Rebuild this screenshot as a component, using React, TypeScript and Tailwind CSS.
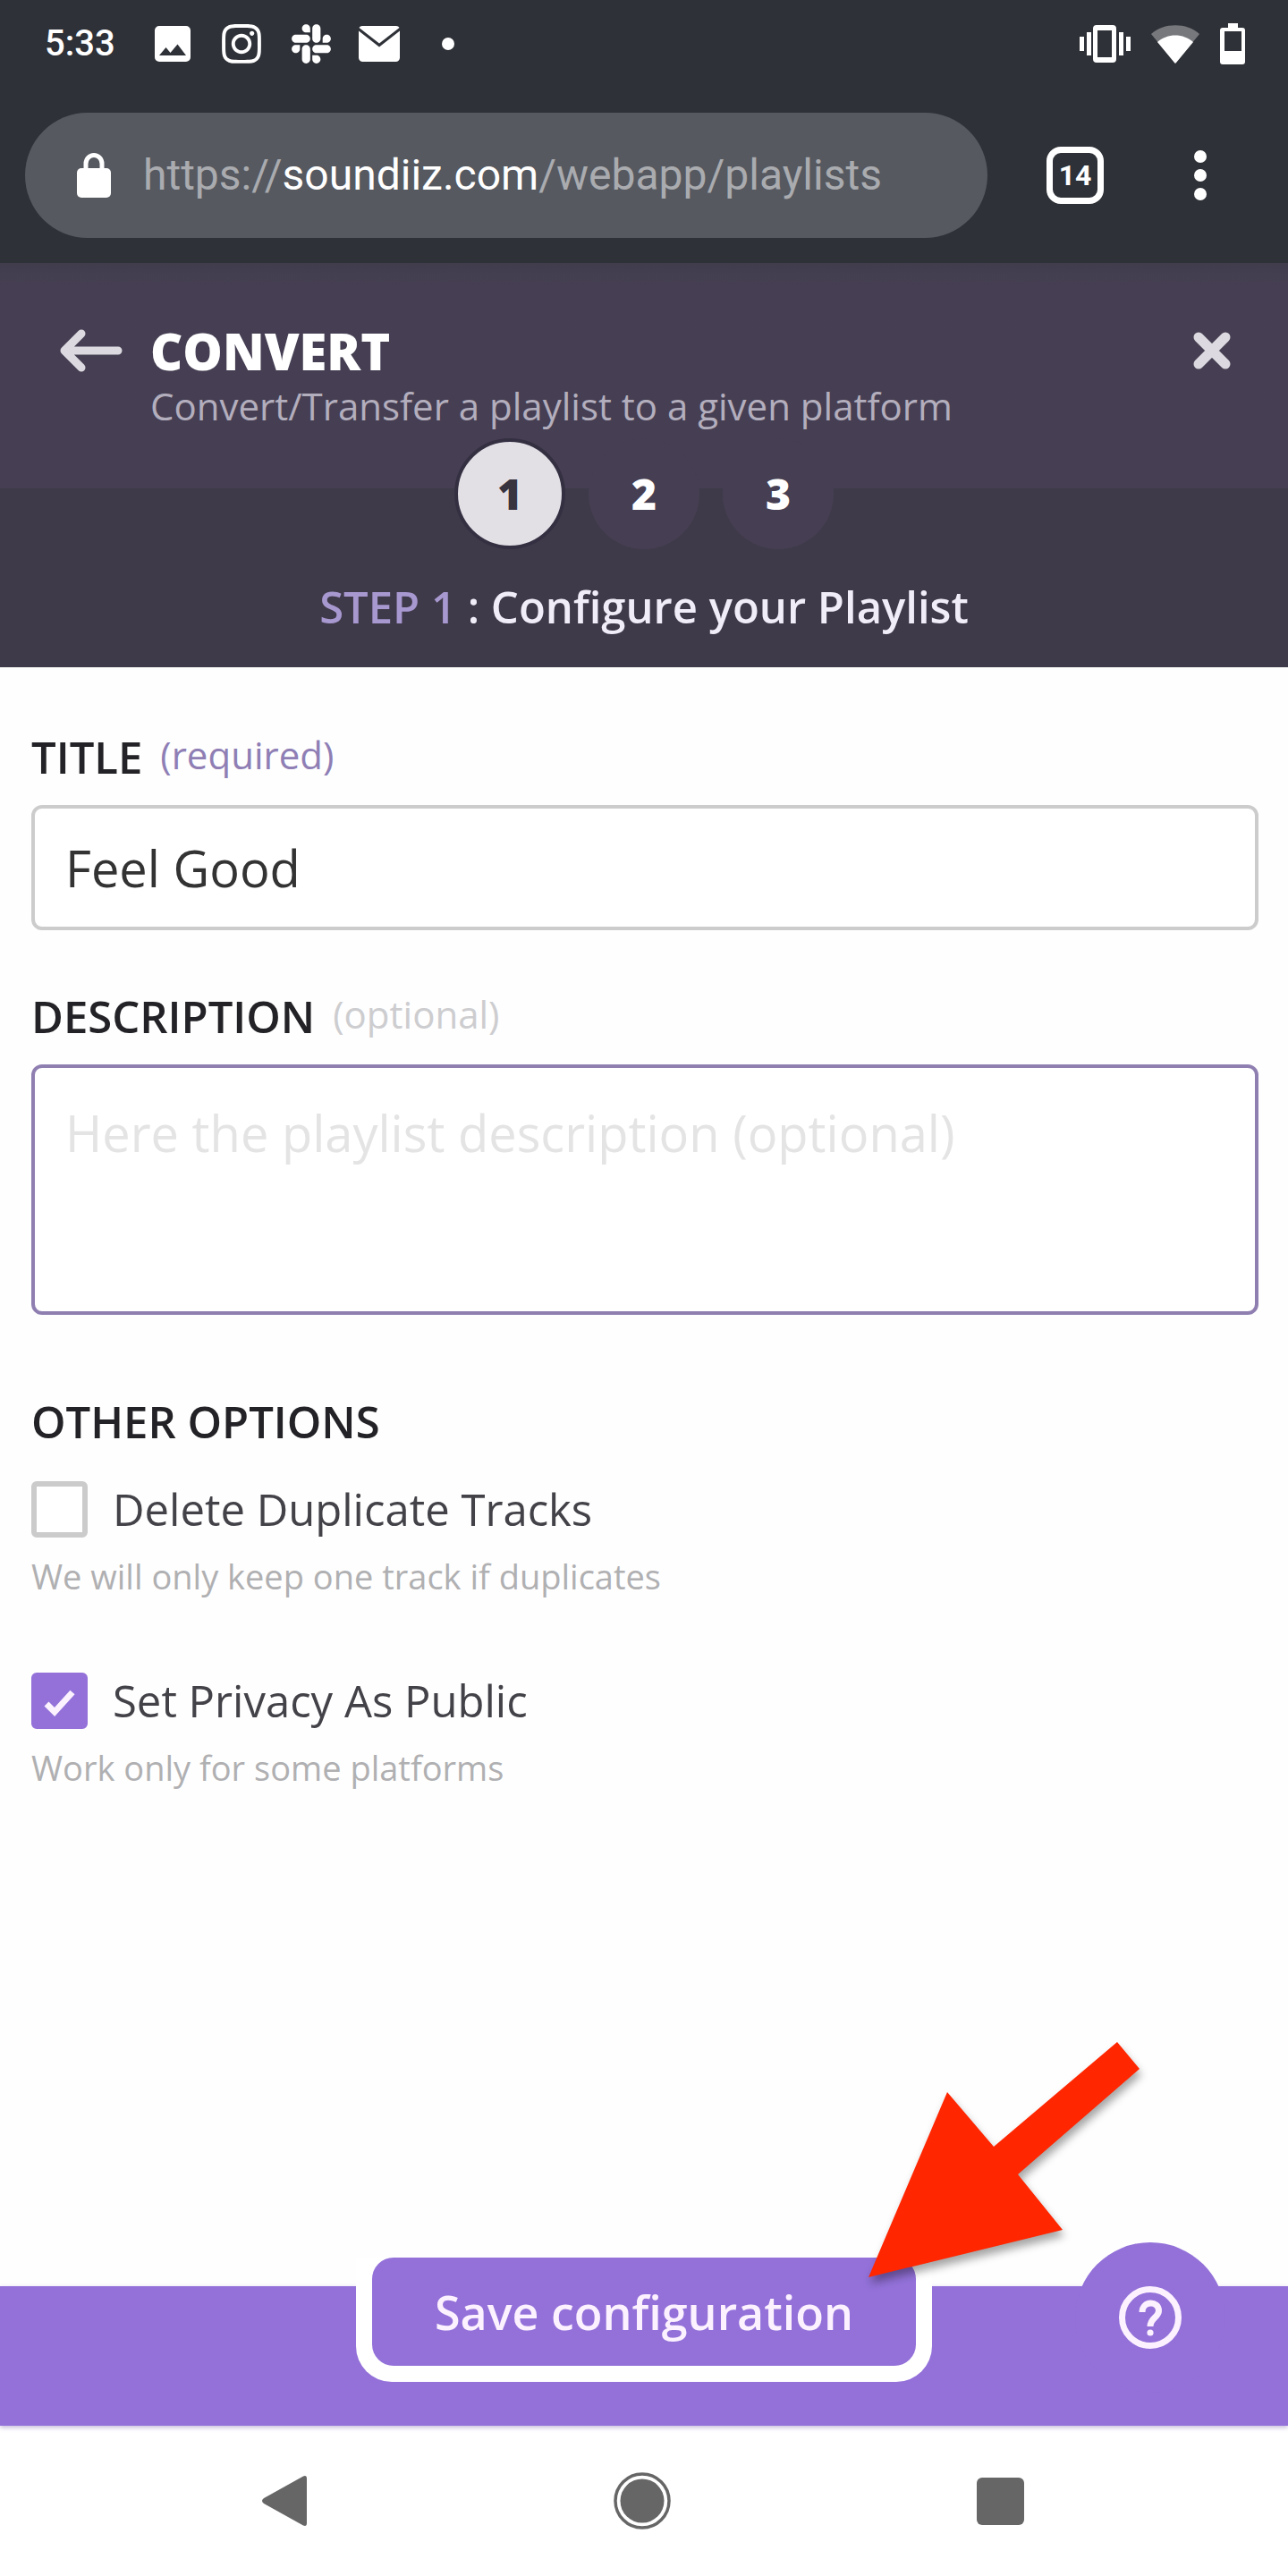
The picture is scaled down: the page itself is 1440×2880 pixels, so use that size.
import { useState } from 'react'
import { FaInstagram, FaSlack } from 'react-icons/fa'

const STEPS = [1, 2, 3]

function StatusBar() {
  return (
    <div className="flex h-[98px] items-center justify-between pl-[50px] pr-12 text-white">
      <div className="flex items-center">
        <span className="mr-11 font-[Roboto,sans-serif] text-[40px] font-medium leading-none">5:33</span>
        <svg className="mr-8 h-10 w-10" viewBox="0 0 40 40" fill="currentColor" aria-hidden="true">
          <path
            fillRule="evenodd"
            d="M5 0h30a5 5 0 0 1 5 5v30a5 5 0 0 1-5 5H5a5 5 0 0 1-5-5V5a5 5 0 0 1 5-5Zm0 33h30L25.500 20.500l-8 9.500-5-6Z"
          />
        </svg>
        <FaInstagram className="mr-7 size-[50px]" aria-hidden="true" />
        <FaSlack className="mr-7 size-[50px]" aria-hidden="true" />
        <svg className="mr-[47px] h-10 w-[46px]" viewBox="0 0 46 40" fill="currentColor" aria-hidden="true">
          <path d="M4 0h38c1.500 0 2.800.7 3.500 2L23 19.500.5 2C1.200.7 2.500 0 4 0Z" />
          <path d="M0 5.500 23 23.500 46 5.500V35.500a4.500 4.500 0 0 1-4.500 4.500h-37A4.500 4.500 0 0 1 0 35.500Z" />
        </svg>
        <span className="size-3.5 rounded-full bg-white" />
      </div>
      <div className="flex items-center gap-[23px]">
        <svg className="h-[42px] w-[57px]" viewBox="0 0 57 42" fill="currentColor" aria-hidden="true">
          <rect x="0" y="13" width="5" height="16" />
          <rect x="8" y="8" width="5" height="26" />
          <path
            fillRule="evenodd"
            d="M19 0h18a4 4 0 0 1 4 4v34a4 4 0 0 1-4 4H19a4 4 0 0 1-4-4V4a4 4 0 0 1 4-4Zm1 6v30h16V6Z"
          />
          <rect x="44" y="8" width="5" height="26" />
          <rect x="52" y="13" width="5" height="16" />
        </svg>
        <svg className="h-[43px] w-[54px]" viewBox="0 0 54 43" fill="currentColor" aria-hidden="true">
          <path opacity=".35" d="M0 10C14-3 40-3 54 10L27 43Z" />
          <path d="M7 19C18 9 36 9 47 19L28 42q-1 1.400-2 0Z" />
        </svg>
        <svg className="h-[46px] w-7" viewBox="0 0 28 46" fill="currentColor" aria-hidden="true">
          <path
            fillRule="evenodd"
            d="M9 0h11v5h5a3 3 0 0 1 3 3v35a3 3 0 0 1-3 3H3a3 3 0 0 1-3-3V8a3 3 0 0 1 3-3h6ZM5 9v22h19V9Z"
          />
        </svg>
      </div>
    </div>
  )
}

function AddressBar() {
  return (
    <div className="flex items-center py-7 pl-7 pr-[84px] font-[Roboto,sans-serif]">
      <button
        type="button"
        aria-label="Edit address"
        className="flex h-[140px] flex-1 items-center rounded-full bg-[#565960] pl-[58px] text-left"
      >
        <svg className="mr-9 h-[50px] w-[38px] shrink-0 text-white" viewBox="0 0 38 50" aria-hidden="true">
          <path d="M10 20V12a9 9.500 0 0 1 18 0v8" fill="none" stroke="currentColor" strokeWidth="5" />
          <rect y="17" width="38" height="33" rx="5" fill="currentColor" />
        </svg>
        <span className="whitespace-nowrap text-5xl leading-none text-[#a9abaf]">
          https://<span className="text-white">soundiiz.com</span>/webapp/playlists
        </span>
      </button>
      <button
        type="button"
        aria-label="Open tabs"
        className="ml-[66px] flex size-16 items-center justify-center rounded-2xl border-[7px] border-white text-[32px] font-bold leading-none text-white"
      >
        14
      </button>
      <button type="button" aria-label="Menu" className="ml-[94px] flex w-7 flex-col items-center gap-[7px] py-4">
        <span className="size-3.5 rounded-full bg-white" />
        <span className="size-3.5 rounded-full bg-white" />
        <span className="size-3.5 rounded-full bg-white" />
      </button>
    </div>
  )
}

function ConvertHeader() {
  return (
    <header>
      <div className="flex items-start bg-linear-to-b from-[#413d4d] to-[#463f53] to-10% px-16 pb-[62px] pt-[66px]">
        <button type="button" aria-label="Back" className="flex h-16 w-[104px] shrink-0 items-center">
          <svg className="h-12 w-[76px]" viewBox="0 0 76 48" fill="none" aria-hidden="true">
            <path
              d="M68 24H8M27 5 8 24 27 43"
              stroke="#dcdae0"
              strokeWidth="9"
              strokeLinecap="round"
              strokeLinejoin="round"
            />
          </svg>
        </button>
        <div className="flex-1">
          <h1 className="text-[56px] font-extrabold leading-[64px] text-white">CONVERT</h1>
          <p className="text-[42px] leading-[60px] text-[#b3aebd]">Convert/Transfer a playlist to a given platform</p>
        </div>
        <button type="button" aria-label="Close" className="flex h-16 shrink-0 items-center">
          <svg className="size-[42px]" viewBox="0 0 42 42" aria-hidden="true">
            <path d="M6 6 36 36M36 6 6 36" stroke="#dcdae0" strokeWidth="11" strokeLinecap="round" />
          </svg>
        </button>
      </div>
      <div className="flex flex-col bg-[#3f3a4a] pb-9 text-center">
        <ol className="relative -mt-14 flex justify-center gap-[26px] text-5xl font-extrabold">
          {STEPS.map((step) => (
            <li
              key={step}
              className={
                step === 1
                  ? 'flex size-[124px] items-center justify-center rounded-full border-4 border-[#352f42] bg-[#e2dfe5] text-[#37333f]'
                  : 'flex size-[124px] items-center justify-center rounded-full bg-[#463f53] text-white'
              }
            >
              {step}
            </li>
          ))}
        </ol>
        <h2 className="mt-8 text-[49px] font-semibold leading-[64px] text-[#f1edf8]">
          <span className="text-[#a898d0]">STEP 1</span> : Configure your Playlist
        </h2>
      </div>
    </header>
  )
}

type OptionProps = {
  id: string
  label: string
  hint: string
  checked: boolean
  onChange: (checked: boolean) => void
}

function Option({ id, label, hint, checked, onChange }: OptionProps) {
  return (
    <div>
      <div className="flex items-center">
        <span className="relative mr-7 size-[63px]">
          <input
            id={id}
            type="checkbox"
            checked={checked}
            onChange={(e) => onChange(e.target.checked)}
            className="block size-[63px] appearance-none rounded-md border-[6px] border-[#cbcbcb] bg-white checked:border-[#9371d9] checked:bg-[#9371d9]"
          />
          {checked && (
            <svg className="pointer-events-none absolute inset-0 size-[63px]" viewBox="0 0 63 63" aria-hidden="true">
              <path d="M17 35 26 44 46 22" fill="none" stroke="#fbf1ff" strokeWidth="7" />
            </svg>
          )}
        </span>
        <label htmlFor={id} className="text-[49px] leading-[64px] text-[#434248]">
          {label}
        </label>
      </div>
      <p className="mt-4 text-[38px] leading-[54px] text-[#b0b0b2]">{hint}</p>
    </div>
  )
}

function SaveBar() {
  return (
    <footer className="relative flex h-[156px] items-start justify-center bg-[#9371d9] shadow-[0_2px_5px_rgba(90,60,150,0.35)]">
      <div className="relative -mt-8 rounded-b-[40px] bg-white px-[18px] pb-[18px]">
        <button
          type="submit"
          form="playlist-config"
          className="h-[121px] rounded-3xl bg-[#9371d9] px-[70px] text-[52px] font-semibold leading-none text-[#fcf1ff]"
        >
          Save configuration
        </button>
        <svg
          className="pointer-events-none absolute -top-[248px] left-[567px] z-10 h-[290px] w-80 drop-shadow-[2px_7px_5px_rgba(0,0,0,0.35)]"
          viewBox="0 0 320 290"
          aria-hidden="true"
        >
          <path d="M6 270 94 63 146 124 284 7 309 37 173 155 223 217Z" fill="#ff2600" />
        </svg>
      </div>
      <button
        type="button"
        aria-label="Help"
        className="absolute -top-[49px] right-[70px] flex size-[168px] items-center justify-center rounded-full bg-[#9371d9]"
      >
        <svg className="size-[70px]" viewBox="0 0 70 70" fill="none" stroke="#fcf1ff" aria-hidden="true">
          <circle cx="35" cy="35" r="31.500" strokeWidth="7" />
          <path d="M26 29C26 16 44.500 16 44.500 27.500C44.500 35 35 35 35 45" strokeWidth="7" />
          <circle cx="35" cy="52" r="3.600" fill="#fcf1ff" stroke="none" />
        </svg>
      </button>
    </footer>
  )
}

function NavigationBar() {
  return (
    <nav className="flex h-[168px] items-center justify-between bg-white pl-[292px] pr-[295px] text-[#666]">
      <button type="button" aria-label="Back">
        <svg className="h-[58px] w-[52px]" viewBox="0 0 52 58" fill="currentColor" aria-hidden="true">
          <path d="M47 1.500Q51 0 51 4V54Q51 58 47 56.500L3 32Q-1 29 3 26Z" />
        </svg>
      </button>
      <button type="button" aria-label="Home">
        <svg className="size-16" viewBox="0 0 64 64" aria-hidden="true">
          <circle cx="32" cy="32" r="30" fill="none" stroke="currentColor" strokeWidth="3.500" />
          <circle cx="32" cy="32" r="24.500" fill="currentColor" />
        </svg>
      </button>
      <button type="button" aria-label="Recent apps">
        <span className="block size-[53px] rounded-md bg-[#666]" />
      </button>
    </nav>
  )
}

export default function App() {
  const [title, setTitle] = useState('Feel Good')
  const [description, setDescription] = useState('')
  const [dedupe, setDedupe] = useState(false)
  const [isPublic, setIsPublic] = useState(true)

  return (
    <div className="flex min-h-screen flex-col bg-white font-['Open_Sans',sans-serif]">
      <div className="bg-[#2e3137]">
        <StatusBar />
        <AddressBar />
      </div>
      <ConvertHeader />
      <main className="flex-1 bg-[#fefefe] pb-16 pl-[35px] pr-[33px] pt-[68px]">
        <form id="playlist-config" onSubmit={(e) => e.preventDefault()}>
          <label htmlFor="title" className="flex items-start gap-5">
            <span className="text-[49px] font-semibold leading-[64px] text-[#232226]">TITLE</span>
            <span className="text-[42px] leading-[60px] text-[#8f7fb5]">(required)</span>
          </label>
          <input
            id="title"
            type="text"
            value={title}
            onChange={(e) => setTitle(e.target.value)}
            className="mt-[22px] block h-[140px] w-full rounded-xl border-4 border-[#cccccc] bg-white px-[34px] text-[56px] text-[#333333] outline-none"
          />
          <label htmlFor="description" className="mt-16 flex items-start gap-5">
            <span className="text-[49px] font-semibold leading-[64px] text-[#232226]">DESCRIPTION</span>
            <span className="text-[42px] leading-[60px] text-[#cdcdd0]">(optional)</span>
          </label>
          <textarea
            id="description"
            value={description}
            onChange={(e) => setDescription(e.target.value)}
            placeholder="Here the playlist description (optional)"
            className="mt-[22px] block h-[280px] w-full resize-none rounded-xl border-4 border-[#8f7fb1] bg-white px-[34px] pt-9 text-[56px] leading-[72px] text-[#333333] outline-none placeholder:text-[#e4e4e4]"
          />
          <h3 className="mt-[87px] text-[49px] font-semibold leading-[64px] text-[#232226]">OTHER OPTIONS</h3>
          <div className="mt-[34px] flex flex-col gap-20">
            <Option
              id="dedupe"
              label="Delete Duplicate Tracks"
              hint="We will only keep one track if duplicates"
              checked={dedupe}
              onChange={setDedupe}
            />
            <Option
              id="public"
              label="Set Privacy As Public"
              hint="Work only for some platforms"
              checked={isPublic}
              onChange={setIsPublic}
            />
          </div>
        </form>
      </main>
      <SaveBar />
      <NavigationBar />
    </div>
  )
}
